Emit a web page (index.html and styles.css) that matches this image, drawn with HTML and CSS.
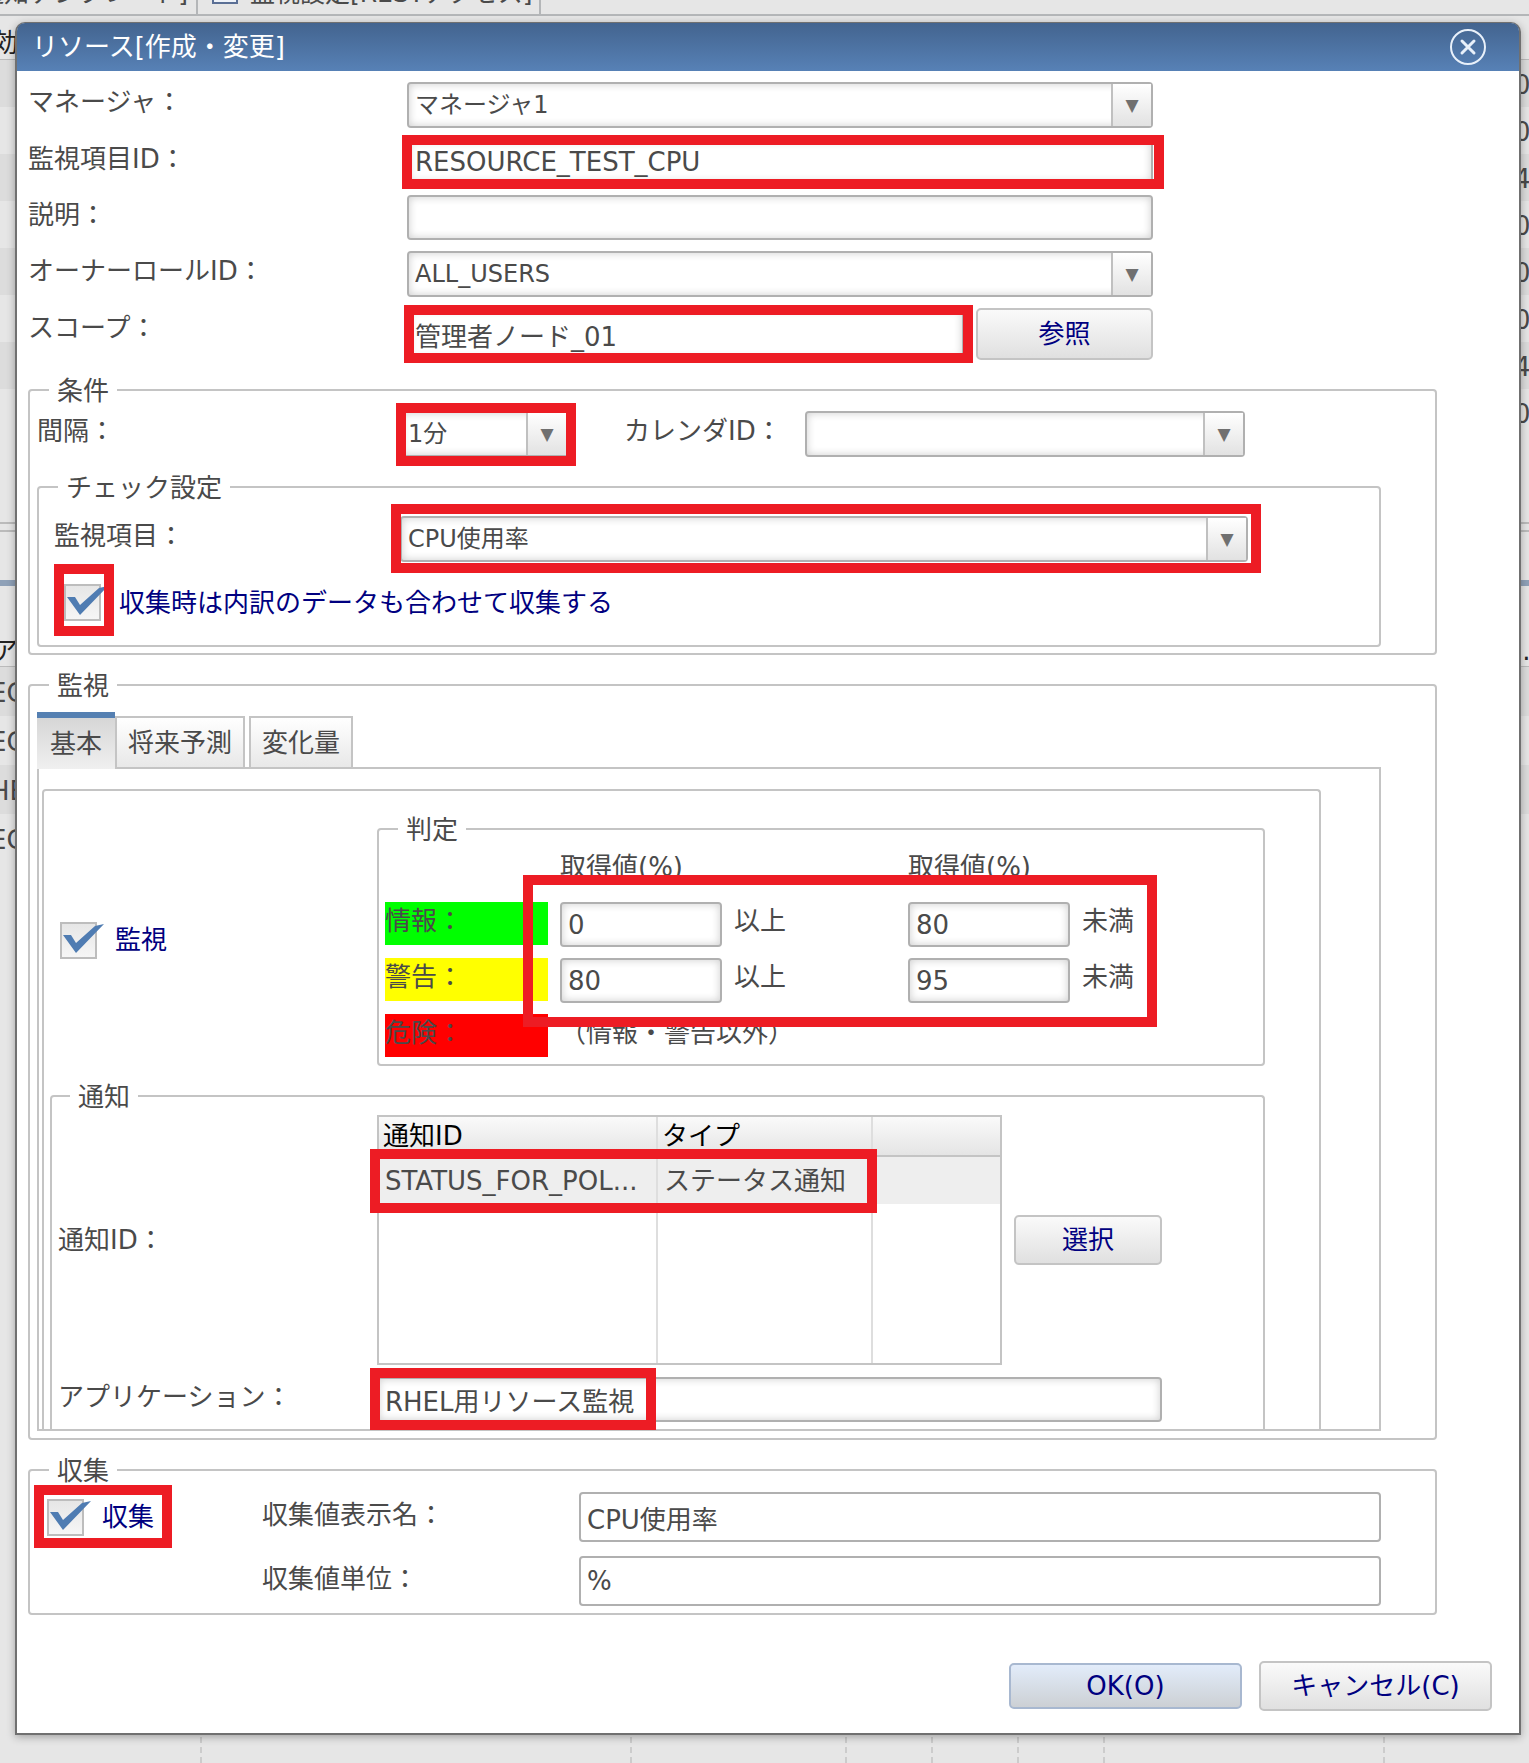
FILE: index.html
```html
<!DOCTYPE html>
<html lang="ja">
<head>
    <meta charset="UTF-8">
    <meta name="viewport" content="width=device-width, initial-scale=1.0">
    <title>リソース[作成・変更]</title>
    <link rel="stylesheet" href="styles.css">
</head>
<body>
    <!-- Workbench behind the dialog -->
    <div class="workbench">
        <div class="view-tabs">
            <div class="view-tab first">通知テンプレート]</div>
            <div class="view-tab">
                <svg class="view-icon" width="26" height="20" viewBox="0 0 26 20"><rect x="1" y="1" width="24" height="18" fill="#eef2f8" stroke="#5a6f95" stroke-width="2"/></svg>
                監視設定[RESTアクセス]
            </div>
        </div>
        <div class="list-head"><span>効</span></div>
        <div class="list">
            <div class="list-row"><span></span><span>0</span></div>
            <div class="list-row"><span></span><span>0</span></div>
            <div class="list-row"><span></span><span>4</span></div>
            <div class="list-row"><span></span><span>0</span></div>
            <div class="list-row"><span></span><span>0</span></div>
            <div class="list-row"><span></span><span>0</span></div>
            <div class="list-row"><span></span><span>4</span></div>
            <div class="list-row"><span></span><span>0</span></div>
        </div>
        <div class="sash"></div>
        <div class="list-title"></div>
        <div class="list-head lower"><span>ア</span><span>...</span></div>
        <div class="list lower">
            <div class="list-row"><span>EC</span></div>
            <div class="list-row"><span>EC</span></div>
            <div class="list-row"><span>HE</span></div>
            <div class="list-row"><span>EC</span></div>
        </div>
        <div class="columns">
            <i></i><i></i><i></i><i></i><i></i><i></i><i></i>
        </div>
    </div>

    <form class="dialog">
        <header class="title-bar">
            <h1>リソース[作成・変更]</h1>
            <button type="button" class="close" aria-label="閉じる">
                <svg width="40" height="40" viewBox="0 0 40 40" fill="none" stroke="#e8f0fa" stroke-linecap="round">
                    <circle cx="20" cy="20" r="17" stroke-width="2"/>
                    <path d="M14 14L26 26M26 14L14 26" stroke-width="3"/>
                </svg>
            </button>
        </header>

        <main class="dialog-body">
            <div class="general">
                <label for="manager">マネージャ：</label>
                <div class="combo">
                    <select id="manager"><option>マネージャ1</option></select>
                </div>

                <label for="monitor-id">監視項目ID：</label>
                <div class="field">
                    <input type="text" id="monitor-id" value="RESOURCE_TEST_CPU">
                    <span class="mark mark-id"></span>
                </div>

                <label for="description">説明：</label>
                <div class="field">
                    <input type="text" id="description">
                </div>

                <label for="owner-role">オーナーロールID：</label>
                <div class="combo">
                    <select id="owner-role"><option>ALL_USERS</option></select>
                </div>

                <label for="scope">スコープ：</label>
                <div class="scope">
                    <div class="field">
                        <input type="text" id="scope" class="tall" value="管理者ノード_01">
                        <span class="mark mark-scope"></span>
                    </div>
                    <button type="button" class="btn btn-browse">参照</button>
                </div>
            </div>

            <fieldset class="group condition">
                <legend>条件</legend>
                <div class="interval-row">
                    <label for="interval">間隔：</label>
                    <div class="combo">
                        <select id="interval"><option>1分</option></select>
                        <span class="mark mark-interval"></span>
                    </div>
                    <label for="calendar" class="calendar-label">カレンダID：</label>
                    <div class="combo">
                        <select id="calendar"><option></option></select>
                    </div>
                </div>

                <fieldset class="group check-setting">
                    <legend>チェック設定</legend>
                    <div class="item-row">
                        <label for="item">監視項目：</label>
                        <div class="combo">
                            <select id="item"><option>CPU使用率</option></select>
                            <span class="mark mark-item"></span>
                        </div>
                    </div>
                    <label class="check">
                        <span class="check-box">
                            <input type="checkbox" checked>
                            <svg class="tick" width="46" height="36" viewBox="0 0 46 36"><path d="M3 13L11 13L16 21L35 4L44 2L16 31Z" fill="#4f7cb2"/></svg>
                            <span class="mark mark-breakdown"></span>
                        </span>
                        収集時は内訳のデータも合わせて収集する
                    </label>
                </fieldset>
            </fieldset>

            <fieldset class="group monitor">
                <legend>監視</legend>
                <div class="tabs" role="tablist">
                    <button type="button" class="tab active" role="tab" aria-selected="true">基本</button>
                    <button type="button" class="tab" role="tab">将来予測</button>
                    <button type="button" class="tab" role="tab">変化量</button>
                </div>
                <div class="tab-panel">
                    <div class="basic">
                        <div class="judge-row">
                            <label class="check">
                                <span class="check-box">
                                    <input type="checkbox" checked>
                                    <svg class="tick" width="46" height="36" viewBox="0 0 46 36"><path d="M3 13L11 13L16 21L35 4L44 2L16 31Z" fill="#4f7cb2"/></svg>
                                </span>
                                監視
                            </label>
                            <fieldset class="group judge">
                                <legend>判定</legend>
                                <div class="thresholds">
                                    <span class="head head-low">取得値(%)</span>
                                    <span class="head head-high">取得値(%)</span>

                                    <span class="level info">情報：</span>
                                    <input type="text" aria-label="情報 下限" value="0">
                                    <span class="unit">以上</span>
                                    <input type="text" aria-label="情報 上限" value="80">
                                    <span class="unit">未満</span>

                                    <span class="level warning">警告：</span>
                                    <input type="text" aria-label="警告 下限" value="80">
                                    <span class="unit">以上</span>
                                    <input type="text" aria-label="警告 上限" value="95">
                                    <span class="unit">未満</span>

                                    <span class="level critical">危険：</span>
                                    <span class="unit others">（情報・警告以外）</span>
                                    <span class="mark mark-thresholds"></span>
                                </div>
                            </fieldset>
                        </div>

                        <fieldset class="group notify">
                            <legend>通知</legend>
                            <div class="notify-grid">
                                <span class="notify-label">通知ID：</span>
                                <div class="notify-list">
                                    <div class="table-box">
                                        <table>
                                            <thead>
                                                <tr><th>通知ID</th><th>タイプ</th><th></th></tr>
                                            </thead>
                                            <tbody>
                                                <tr class="selected"><td>STATUS_FOR_POL...</td><td>ステータス通知</td><td></td></tr>
                                                <tr><td></td><td></td><td></td></tr>
                                                <tr><td></td><td></td><td></td></tr>
                                                <tr><td></td><td></td><td></td></tr>
                                            </tbody>
                                        </table>
                                        <span class="mark mark-notify"></span>
                                    </div>
                                    <button type="button" class="btn btn-select">選択</button>
                                </div>
                                <label for="application">アプリケーション：</label>
                                <div class="field">
                                    <input type="text" id="application" value="RHEL用リソース監視">
                                    <span class="mark mark-application"></span>
                                </div>
                            </div>
                        </fieldset>
                    </div>
                </div>
            </fieldset>

            <fieldset class="group collect">
                <legend>収集</legend>
                <div class="collect-grid">
                    <label class="check">
                        <span class="check-box">
                            <input type="checkbox" checked>
                            <svg class="tick" width="46" height="36" viewBox="0 0 46 36"><path d="M3 13L11 13L16 21L35 4L44 2L16 31Z" fill="#4f7cb2"/></svg>
                        </span>
                        収集
                        <span class="mark mark-collect"></span>
                    </label>
                    <label for="display-name" class="collect-label">収集値表示名：</label>
                    <input type="text" id="display-name" class="flat" value="CPU使用率">
                    <label for="measure" class="collect-label">収集値単位：</label>
                    <input type="text" id="measure" class="flat" value="%">
                </div>
            </fieldset>
        </main>

        <footer class="actions">
            <button type="submit" class="btn btn-ok">OK(O)</button>
            <button type="button" class="btn btn-cancel">キャンセル(C)</button>
        </footer>
    </form>
</body>
</html>
```

FILE: styles.css
```css
* {
    box-sizing: border-box;
}

body {
    margin: 0;
    font-family: "DejaVu Sans", "Noto Sans CJK JP", sans-serif;
    font-size: 26px;
    line-height: 40px;
    color: #4a4a4a;
    background: #e6e6e6;
}

input, select, button {
    font: inherit;
    color: inherit;
    margin: 0;
}

/* Workbench */
.workbench {
    display: flex;
    flex-direction: column;
    height: 100vh;
    overflow: hidden;
}

.view-tabs {
    display: flex;
    align-items: flex-end;
    height: 16px;
    border-bottom: 2px solid #b4b6b8;
}

.view-tab {
    display: flex;
    align-items: center;
    gap: 12px;
    padding: 0 6px 0 14px;
    border-right: 2px solid #b4b6b8;
    font-size: 25px;
    white-space: nowrap;
}

.view-tab.first {
    width: 198px;
    justify-content: flex-end;
    padding: 0 8px 0 0;
}

.list-head {
    display: flex;
    justify-content: space-between;
    height: 44px;
    color: #222;
    border-bottom: 1px solid #bbb;
}

.list-head span:first-child {
    text-indent: -8px;
    line-height: 54px;
}

.list-row {
    display: flex;
    justify-content: space-between;
    height: 47px;
    line-height: 50px;
}

.list-row span:first-child {
    text-indent: -10px;
}

.list-row span:nth-child(2) {
    width: 15px;
    overflow: hidden;
}

.list-row:nth-child(odd) {
    background: #dcdcdc;
}

.list {
    height: 462px;
}

.sash {
    height: 10px;
    border-top: 2px solid #bbb;
    border-bottom: 2px solid #bbb;
}

.list-title {
    height: 54px;
    border-bottom: 6px solid #8fa1b8;
}

.list-head.lower {
    height: 81px;
    padding-top: 45px;
}

.list-head.lower span {
    line-height: 40px;
}

.list-head.lower span:last-child {
    width: 15px;
    overflow: hidden;
}

.list.lower {
    height: 200px;
}

.lower .list-row {
    height: 49px;
    line-height: 53px;
}

.columns {
    display: grid;
    grid-template-columns: 202px 430px 215px 86px 86px 86px 280px;
    flex: 1;
}

.columns i {
    border-right: 2px dashed #ccc;
}

/* Dialog */
.dialog {
    position: absolute;
    top: 22px;
    left: 15px;
    right: 8px;
    background: #fff;
    border: 2px solid #707070;
    border-top-width: 1px;
    border-radius: 10px 10px 0 0;
    box-shadow: 0 2px 8px rgba(0, 0, 0, 0.3);
}

.title-bar {
    display: flex;
    justify-content: space-between;
    align-items: center;
    height: 48px;
    padding: 0 31px 0 15px;
    background: linear-gradient(#43648f, #5781b6);
    border-radius: 8px 8px 0 0;
    color: #fff;
}

.title-bar h1 {
    margin: 0;
    font-size: 26px;
    font-weight: normal;
}

.close {
    display: flex;
    padding: 0;
    border: 0;
    background: none;
}

.dialog-body {
    padding: 11px 82px 0 11px;
}

.general {
    display: grid;
    grid-template-columns: 379px 1fr;
    row-gap: 11px;
    padding-right: 284px;
}

/* Controls */
input[type="text"], select {
    display: block;
    width: 100%;
    height: 45px;
    padding: 0 6px;
    border: 2px solid #b0b0b0;
    border-radius: 4px;
    background: #fff;
    box-shadow: inset 0 0 8px rgba(0, 0, 0, 0.2);
    outline: none;
}

input.tall {
    height: 52px;
}

input.flat {
    height: 50px;
    box-shadow: none;
}

.field, .combo {
    position: relative;
}

.combo select {
    height: 46px;
    appearance: none;
    font-size: 24px;
}

.combo::after {
    content: "▼";
    position: absolute;
    top: 2px;
    right: 2px;
    bottom: 2px;
    width: 38px;
    border-left: 2px solid #c0c0c0;
    background: linear-gradient(#fff, #e2e2e2);
    color: #707070;
    font-size: 17px;
    line-height: 42px;
    text-align: center;
    pointer-events: none;
}

.btn {
    height: 50px;
    padding: 0;
    border: 2px solid #c4c4c4;
    border-radius: 5px;
    background: linear-gradient(#fafafa, #e0e0e0);
    color: #000080;
}

.scope {
    display: flex;
    gap: 12px;
}

.scope .field {
    flex: 1;
}

.btn-browse {
    width: 177px;
    height: 52px;
}

.check {
    position: relative;
    display: flex;
    align-items: center;
    gap: 18px;
    width: fit-content;
    height: 37px;
    color: #000080;
}

.check-box {
    position: relative;
    display: block;
    width: 37px;
    height: 37px;
}

.check input {
    display: block;
    width: 37px;
    height: 37px;
    appearance: none;
    border: 2px solid #bdbdbd;
    background: linear-gradient(#e6e6e6, #f6f6f6);
}

.tick {
    position: absolute;
    top: 0;
    left: 0;
}

/* Groups */
.group {
    min-width: 0;
    margin: 15px 0 0;
    padding: 0;
    border: 2px solid #c4c4c4;
    border-radius: 4px;
}

legend {
    margin-left: 19px;
    padding: 2px 8px 0;
    line-height: 28px;
}

.condition {
    padding: 6px 54px 6px 7px;
}

.condition > legend {
    margin-left: 12px;
}

.interval-row {
    display: grid;
    grid-template-columns: 363px 168px 56px 181px 440px;
}

.calendar-label {
    grid-column: 4;
}

.check-setting {
    padding: 14px 131px 24px 15px;
}

.check-setting > legend {
    margin-left: 4px;
}

.item-row {
    display: grid;
    grid-template-columns: 346px 1fr;
    margin-bottom: 22px;
}

.check-setting .check {
    margin-left: 10px;
}

.monitor {
    padding: 12px 54px 7px 7px;
}

.monitor > legend {
    margin-left: 12px;
}

.tabs {
    display: flex;
    align-items: flex-end;
}

.tab {
    height: 51px;
    margin-right: 4px;
    padding: 0 11px;
    border: 2px solid #c4c4c4;
    border-bottom: 0;
    background: linear-gradient(#fff, #e8e8e8);
}

.tab.active {
    height: 57px;
    margin: 0 0 -2px;
    padding: 0 13px;
    border-width: 6px 0 0;
    border-color: #5580b2;
    background: linear-gradient(#d6d6d6, #f0f0f0);
}

.tab-panel {
    padding: 20px 58px 0 3px;
    border: 2px solid #c4c4c4;
}

.basic {
    padding: 23px 54px 0 6px;
    border: 2px solid #c4c4c4;
    border-bottom: 0;
    border-radius: 4px 4px 0 0;
}

.judge-row {
    display: grid;
    grid-template-columns: 327px 1fr;
    align-items: center;
}

.judge-row > .check {
    margin-left: 10px;
}

.judge {
    margin: 0;
    padding: 0 6px 6px;
}

.judge > legend {
    margin-left: 13px;
}

.thresholds {
    position: relative;
    display: grid;
    grid-template-columns: 163px 162px 162px 162px 1fr;
    grid-template-rows: 46px 44px 44px 44px;
    gap: 12px;
}

.head {
    line-height: 46px;
    white-space: nowrap;
}

.head-low {
    grid-column: 2;
}

.head-high {
    grid-column: 4;
}

.level, .unit {
    height: 43px;
    line-height: 38px;
}

.level {
    grid-column: 1;
}

.info {
    background: #00ff00;
}

.warning {
    background: #ffff00;
}

.critical {
    background: #ff0000;
}

.others {
    grid-column: 2 / 5;
}

.notify {
    padding: 4px 101px 7px 6px;
    border-bottom: 0;
    border-radius: 4px 4px 0 0;
}

.notify > legend {
    margin-left: 12px;
}

.notify-grid {
    display: grid;
    grid-template-columns: 319px 1fr;
    row-gap: 12px;
}

.notify-label {
    align-self: center;
}

.notify-list {
    display: flex;
    align-items: center;
    gap: 12px;
}

.table-box {
    position: relative;
    flex: 1;
    border: 2px solid #c4c4c4;
}

.btn-select {
    width: 148px;
}

table {
    width: 100%;
    table-layout: fixed;
    border-collapse: collapse;
}

th, td {
    height: 53px;
    padding: 0 6px;
    border-right: 2px solid #dedede;
    text-align: left;
    white-space: nowrap;
}

th {
    width: 215px;
    height: 39px;
    padding: 0 4px;
    border-bottom: 2px solid #c4c4c4;
    color: #000;
    font-weight: normal;
    line-height: 37px;
}

th:first-child {
    width: 278px;
}

th:last-child {
    width: auto;
}

th:last-child, td:last-child {
    border-right: 0;
}

thead tr {
    background: linear-gradient(#fafafa, #e4e4e4);
}

.selected {
    background: #eee;
}

.selected td {
    height: 48px;
}

.collect {
    padding: 7px 54px 7px 17px;
}

.collect > legend {
    margin-left: 2px;
}

.collect-grid {
    display: grid;
    grid-template-columns: 215px 317px 1fr;
    row-gap: 14px;
}

.collect-grid .check {
    justify-self: start;
    align-self: center;
}

.collect-label {
    grid-column: 2;
    line-height: 46px;
}

.actions {
    display: flex;
    justify-content: flex-end;
    align-items: center;
    gap: 17px;
    padding: 46px 27px 22px 0;
}

.btn-ok, .btn-cancel {
    width: 233px;
}

.btn-ok {
    height: 46px;
    border-color: #a8b8d0;
    background: linear-gradient(#e2ecfa, #ccd0d4);
}

/* Red frames over the fields to fill in */
.mark {
    position: absolute;
    z-index: 1;
    border: 10px solid #ed1c24;
    pointer-events: none;
}

.mark-id {
    inset: -4px -11px -5px -5px;
}

.mark-scope {
    inset: -3px -9px -3px -3px;
}

.mark-interval {
    inset: -8px -8px -9px -4px;
}

.mark-item {
    inset: -12px -13px -11px -9px;
}

.mark-breakdown {
    inset: -20px -13px -15px -10px;
}

.mark-thresholds {
    top: 31px;
    left: 138px;
    width: 634px;
    height: 152px;
}

.mark-notify {
    top: 32px;
    left: -9px;
    width: 507px;
    height: 64px;
}

.mark-application {
    top: -9px;
    left: -7px;
    width: 286px;
    height: 62px;
}

.mark-collect {
    inset: -14px -18px -12px -13px;
}
```
